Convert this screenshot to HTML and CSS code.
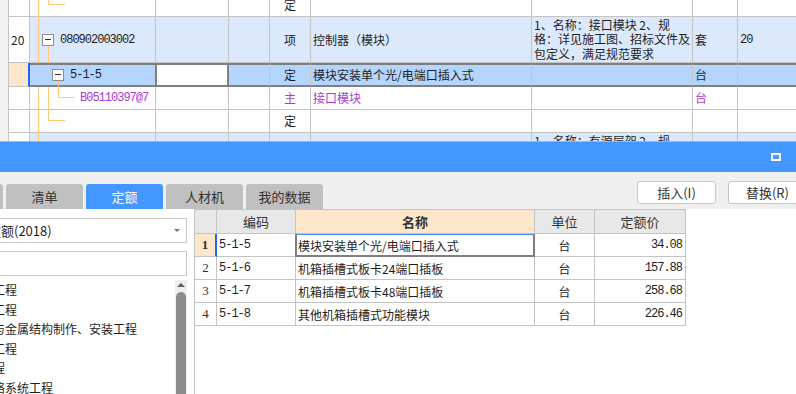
FILE: index.html
```html
<!DOCTYPE html>
<html lang="zh-CN">
<head>
    <meta charset="UTF-8">
    <title>定额</title>
    <link rel="stylesheet" href="styles.css">
</head>
<body>

    <!-- upper sheet: bill items -->
    <div class="top">
        <div class="sheet">
            <div class="row first">
                <div class="no"></div>
                <div class="code"></div>
                <div></div>
                <div></div>
                <div class="center">定</div>
                <div></div>
                <div></div>
                <div></div>
                <div></div>
            </div>
            <div class="row tall hl">
                <div class="no">20</div>
                <div class="code"><span class="fold lv1"></span><span class="mono">080902003002</span></div>
                <div></div>
                <div></div>
                <div class="center">项</div>
                <div>控制器（模块）</div>
                <div class="desc">1、名称：接口模块 2、规格：详见施工图、招标文件及包定义，满足规范要求</div>
                <div>套</div>
                <div class="mono">20</div>
            </div>
            <div class="row sel">
                <div class="no"></div>
                <div class="code"><span class="fold lv2"></span><span class="mono">5-1-5</span></div>
                <div class="edit"></div>
                <div></div>
                <div class="center">定</div>
                <div>模块安装单个光/电端口插入式</div>
                <div></div>
                <div>台</div>
                <div></div>
            </div>
            <div class="row main-mat">
                <div class="no"></div>
                <div class="code lv3"><span class="mono">B05110397@7</span></div>
                <div></div>
                <div></div>
                <div class="center">主</div>
                <div>接口模块</div>
                <div></div>
                <div>台</div>
                <div></div>
            </div>
            <div class="row">
                <div class="no"></div>
                <div class="code"></div>
                <div></div>
                <div></div>
                <div class="center">定</div>
                <div></div>
                <div></div>
                <div></div>
                <div></div>
            </div>
            <div class="row tall hl">
                <div class="no"></div>
                <div class="code"></div>
                <div></div>
                <div></div>
                <div></div>
                <div></div>
                <div class="desc">1、名称：有源层架 2、规格：详见施工图、招标文件及包定义，满足规范要求</div>
                <div></div>
                <div></div>
            </div>
        </div>

        <!-- tree connector lines -->
        <svg class="tree" width="80" height="141">
            <g stroke="#ffc67c" stroke-width="1" fill="none">
                <path d="M38.5 0V63M38.5 87V141"/>
                <path d="M48.5 0V4.5H65"/>
                <path d="M48.5 46V63M48.5 87V120.5H65"/>
                <path d="M58.5 81V97.5H74"/>
            </g>
        </svg>
    </div>

    <!-- lower dock -->
    <div class="titlebar">
        <span class="max-btn"></span>
    </div>

    <div class="toolbar">
        <div class="tabs">
            <div class="tab">工程量</div>
            <div class="tab">清单</div>
            <div class="tab active">定额</div>
            <div class="tab">人材机</div>
            <div class="tab">我的数据</div>
        </div>
        <div class="buttons">
            <button>插入(I)</button>
            <button>替换(R)</button>
        </div>
    </div>

    <div class="content">
        <div class="side">
            <div class="combo"><span>安装工程定额(2018)</span><i class="caret"></i></div>
            <div class="search"></div>
            <div class="tree-list">
                <ul>
                    <li>机械设备工程</li>
                    <li>热力设备工程</li>
                    <li>静置设备与金属结构制作、安装工程</li>
                    <li>电气设备工程</li>
                    <li>给排水工程</li>
                    <li>计算机网络系统工程</li>
                </ul>
                <div class="scroll"><i class="up"></i><div class="thumb"></div></div>
            </div>
        </div>

        <div class="main">
            <div class="grid">
                <div class="grow head">
                    <div></div>
                    <div>编码</div>
                    <div class="sorted">名称</div>
                    <div>单位</div>
                    <div>定额价</div>
                </div>
                <div class="grow cur">
                    <div class="no">1</div>
                    <div class="mono left">5-1-5</div>
                    <div class="active left">模块安装单个光/电端口插入式</div>
                    <div>台</div>
                    <div class="mono right">34.08</div>
                </div>
                <div class="grow">
                    <div class="no">2</div>
                    <div class="mono left">5-1-6</div>
                    <div class="left">机箱插槽式板卡24端口插板</div>
                    <div>台</div>
                    <div class="mono right">157.88</div>
                </div>
                <div class="grow">
                    <div class="no">3</div>
                    <div class="mono left">5-1-7</div>
                    <div class="left">机箱插槽式板卡48端口插板</div>
                    <div>台</div>
                    <div class="mono right">258.68</div>
                </div>
                <div class="grow">
                    <div class="no">4</div>
                    <div class="mono left">5-1-8</div>
                    <div class="left">其他机箱插槽式功能模块</div>
                    <div>台</div>
                    <div class="mono right">226.46</div>
                </div>
            </div>
        </div>
    </div>

</body>
</html>
```

FILE: styles.css
```css
* {
    box-sizing: border-box;
}

html, body {
    margin: 0;
    padding: 0;
}

body {
    width: 796px;
    height: 394px;
    overflow: hidden;
    font-family: "Noto Sans CJK SC", "Noto Sans", sans-serif;
    font-size: 12px;
    color: #1e1e1e;
    background: #f0f0f0;
}

.mono {
    font-family: "Liberation Mono", "Noto Sans CJK SC", monospace;
    font-size: 12px;
    letter-spacing: -1px;
}

/* upper sheet */
.top {
    position: relative;
    height: 141px;
    overflow: hidden;
    background: #f2f2f2;
}

.sheet {
    margin: -7px 0 0 8px;
    width: 820px;
    border-left: 1px solid #c4c4c4;
}

.row {
    display: grid;
    grid-template-columns: 21px 126px 73px 41px 41px 221px 161px 45px 80px;
    height: 23px;
    background: #fff;
}

.row > div {
    display: flex;
    align-items: center;
    padding: 0 2px;
    border-right: 1px solid #c4c4c4;
    border-bottom: 1px solid #c4c4c4;
    white-space: nowrap;
    overflow: hidden;
    line-height: 14px;
}

.row.first {
    height: 24px;
}

.row.tall {
    height: 46px;
}

.row .center {
    justify-content: center;
}

.row .desc {
    white-space: normal;
    padding-right: 0;
    line-height: 14.5px;
}

.hl > div {
    background: #dce9fc;
}

.hl > div.no {
    background: #fff;
}

.sel {
    height: 24px;
}

.sel > div {
    background: #b4d5fe;
    border-top: 2px solid #7f7f7f;
    border-bottom: 2px solid #7f7f7f;
}

.sel > div.no {
    background: #fde7ca;
    border-top: 0;
    border-bottom: 1px solid #c4c4c4;
    border-right: 2px solid #1a66ff;
}

.sel > div.code {
    border-right-color: #7f7f7f;
}

.sel > div.edit {
    background: #fff;
    border-right-color: #7f7f7f;
    box-shadow: inset 1px 0 #7f7f7f, inset -1px 0 #7f7f7f;
}

.main-mat > div {
    color: #a83ec8;
}

.fold {
    position: relative;
    flex: none;
    width: 12px;
    height: 12px;
    margin-right: 6px;
    border: 1px solid #8c8c8c;
    background: #fff;
}

.fold::after {
    content: "";
    position: absolute;
    left: 2px;
    top: 4px;
    width: 6px;
    height: 1px;
    background: #333;
}

.fold.lv1 {
    margin-left: 10px;
}

.fold.lv2 {
    margin-left: 20px;
}

.row .lv3 {
    padding-left: 50px;
}

.tree {
    position: absolute;
    left: 0;
    top: 0;
    pointer-events: none;
}

/* dock title */
.titlebar {
    height: 31px;
    border-top: 1px solid #b4b4b4;
    background: #4397fe;
    display: flex;
    justify-content: flex-end;
    align-items: center;
    padding-right: 15px;
}

.max-btn {
    width: 10px;
    height: 8px;
    border: 2px solid #fff;
}

/* toolbar */
.toolbar {
    height: 37px;
    display: flex;
    justify-content: space-between;
    align-items: flex-start;
    background: #f0f0f0;
}

.tabs {
    display: flex;
    gap: 3px;
    margin-top: 12px;
    margin-left: -74px;
}

.tab {
    width: 77px;
    height: 25px;
    display: flex;
    justify-content: center;
    align-items: center;
    border-radius: 3px 3px 0 0;
    background: #c0c0c0;
    color: #333;
    font-size: 13px;
}

.tab.active {
    background: #4397fe;
    color: #fff;
}

.buttons {
    display: flex;
    gap: 12px;
    margin-top: 9px;
    margin-right: -11px;
}

.buttons button {
    width: 79px;
    height: 23px;
    padding: 0;
    border: 1px solid #c8c8c8;
    border-radius: 3px;
    background: #fff;
    color: #333;
    font-family: inherit;
    font-size: 13px;
}

/* lower content */
.content {
    display: flex;
    height: 185px;
}

.side {
    flex: 0 0 270px;
    margin-left: -75px;
    padding: 9px 7px 0 6px;
    background: #fff;
    border-right: 1px solid #c4c4c4;
    overflow: hidden;
}

.combo {
    height: 25px;
    display: flex;
    justify-content: space-between;
    align-items: center;
    padding: 0 6px 0 4px;
    border: 1px solid #c8c8c8;
    font-size: 13px;
    white-space: nowrap;
}

.caret {
    border-left: 3px solid transparent;
    border-right: 3px solid transparent;
    border-top: 3px solid #777;
}

.search {
    height: 25px;
    margin-top: 8px;
    border: 1px solid #c8c8c8;
}

.tree-list {
    display: flex;
    height: 130px;
    margin-top: 4px;
    overflow: hidden;
}

.tree-list ul {
    flex: 1;
    margin: 0;
    padding: 0 0 0 14px;
    list-style: none;
    white-space: nowrap;
    overflow: hidden;
}

.tree-list li {
    height: 19.5px;
    line-height: 19.5px;
}

.scroll {
    flex: 0 0 12px;
    background: #eeeeee;
}

.scroll .up {
    display: block;
    width: 0;
    margin: 3px auto 0;
    border-left: 4px solid transparent;
    border-right: 4px solid transparent;
    border-bottom: 4px solid #5e5e5e;
}

.thumb {
    width: 10px;
    height: 200px;
    margin: 5px auto 0;
    border-radius: 5px;
    background: #8c8c8c;
}

.main {
    flex: 1;
    background: #fff;
}

.grid {
    width: 491px;
}

.grow {
    display: grid;
    grid-template-columns: 22px 79px 239px 60px 91px;
    height: 23px;
}

.grow > div {
    display: flex;
    justify-content: center;
    align-items: center;
    padding: 0 2px;
    border-right: 1px solid #c4c4c4;
    border-bottom: 1px solid #c4c4c4;
    white-space: nowrap;
    overflow: hidden;
}

.grow .left {
    justify-content: flex-start;
}

.grow .right {
    justify-content: flex-end;
    padding-right: 3px;
}

.grow .no {
    background: #fff;
    font-family: "Liberation Serif", serif;
    font-size: 13px;
    color: #333;
}

.grow.head {
    height: 25px;
    border-top: 1px solid #c4c4c4;
}

.grow.head > div {
    background: #e8e8e8;
    color: #333;
    font-size: 13px;
}

.grow.head > .sorted {
    background: #fde6c9;
    font-weight: bold;
}

.grow.cur > .no {
    background: #fde7ca;
    font-weight: bold;
    border-right: 2px solid #1a66ff;
}

.grow.cur > div:nth-child(2) {
    border-right-color: #7f7f7f;
}

.grow.cur > .active {
    border-right-color: #7f7f7f;
    border-bottom-color: #7f7f7f;
    box-shadow: inset 1px 0 #7f7f7f, inset -1px 0 #7f7f7f, inset 0 -1px #7f7f7f, inset 0 1px #3b8cff;
}
```
